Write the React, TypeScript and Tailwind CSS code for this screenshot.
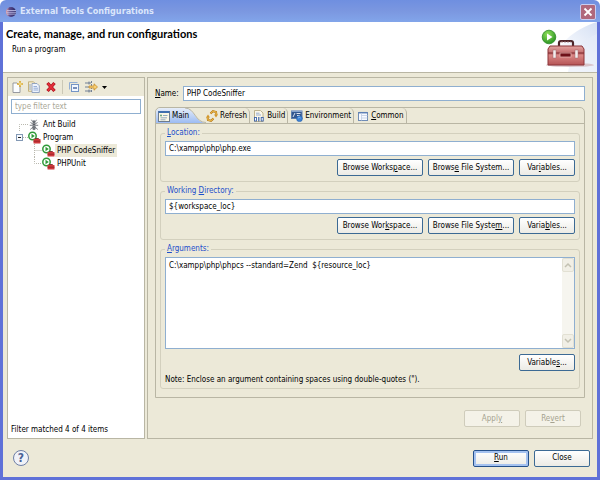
import type { ReactNode } from "react";

const argumentsText = "C:\\xampp\\php\\phpcs --standard=Zend  ${resource_loc}";

function EclipseIcon() {
  return (
    <svg width="12" height="12" viewBox="0 0 12 12" aria-hidden="true">
      <defs>
        <linearGradient id="eclipse" x1="0" x2="1">
          <stop offset="0" stopColor="#f0a9a4" />
          <stop offset="0.35" stopColor="#5c4b8c" />
          <stop offset="1" stopColor="#25255f" />
        </linearGradient>
      </defs>
      <circle cx="6" cy="6" r="5" fill="url(#eclipse)" />
      <path d="M2 4.5h9M1.5 6.3h9.5M2 8.1h8.6" stroke="#c8c8ee" strokeWidth="0.8" />
    </svg>
  );
}

function ToolboxArt() {
  return (
    <svg width="75" height="50" viewBox="0 0 75 50" aria-hidden="true">
      <defs>
        <linearGradient id="sky" x1="0" y1="1" x2="1" y2="0">
          <stop offset="0.3" stopColor="#ffffff" />
          <stop offset="1" stopColor="#d5e0f4" />
        </linearGradient>
        <linearGradient id="box" x1="0" y1="0" x2="0" y2="1">
          <stop offset="0" stopColor="#e3a5a1" />
          <stop offset="0.4" stopColor="#c0686a" />
          <stop offset="0.5" stopColor="#d98583" />
          <stop offset="1" stopColor="#b55456" />
        </linearGradient>
        <radialGradient id="run" cx="0.4" cy="0.3" r="0.8">
          <stop offset="0" stopColor="#8fe05a" />
          <stop offset="1" stopColor="#1f8a1c" />
        </radialGradient>
      </defs>
      <path d="M75 0v50H22C36 22 50 8 75 0Z" fill="url(#sky)" />
      <path d="M75 12C60 18 50 28 46 50h29Z" fill="#e6edf9" opacity="0.6" />
      <ellipse cx="48" cy="43" rx="24" ry="2" fill="#d9c5cb" />
      <path d="M37 24v-3q0-2 2-2h10q2 0 2 2v3" fill="none" stroke="#4d2529" strokeWidth="2.2" />
      <path d="M39 20h10" stroke="#a87a7c" strokeWidth="0.8" strokeDasharray="2 1" />
      <path d="M28 24h32l2 3v16H26V27Z" fill="url(#box)" stroke="#8c3538" strokeWidth="1" />
      <path d="M26 31h36" stroke="#7e2b2f" strokeWidth="1" />
      <rect x="38" y="31" width="11" height="4" fill="#6e1118" stroke="#e3b1ae" strokeWidth="0.8" />
      <rect x="31" y="28" width="3" height="8" fill="#f3eeee" stroke="#a06a6c" strokeWidth="0.5" />
      <rect x="53" y="28" width="3" height="8" fill="#f3eeee" stroke="#a06a6c" strokeWidth="0.5" />
      <circle cx="27" cy="15" r="6.8" fill="url(#run)" stroke="#2d8a26" strokeWidth="0.8" />
      <path d="M25 11.5v7l5.5-3.5Z" fill="#fff" />
    </svg>
  );
}

function NewIcon() {
  return (
    <svg width="12" height="12" viewBox="0 0 12 12" aria-hidden="true">
      <path d="M2 2h4l3 3v6.5H2Z" fill="#fbfdff" stroke="#8d9099" strokeWidth="0.9" />
      <path d="M9 0v6M6 3h6" stroke="#d9a62e" strokeWidth="1.6" />
      <path d="M9 1.5v3M7.5 3h3" stroke="#fff2a8" strokeWidth="0.8" />
    </svg>
  );
}

function DuplicateIcon() {
  return (
    <svg width="12" height="12" viewBox="0 0 12 12" aria-hidden="true">
      <path d="M.5.8h5l2 2v7.5h-7Z" fill="#f4ecd0" stroke="#b9a468" strokeWidth="0.8" />
      <path d="M4 2.5h5l2.3 2.3v6.7H4Z" fill="#eef4fd" stroke="#7e93b8" strokeWidth="0.8" />
      <path d="M5.5 5.5H9M5.5 7.2H10M5.5 9h4.5M2 3v6" stroke="#7f9ccd" strokeWidth="0.8" />
    </svg>
  );
}

function DeleteIcon() {
  return (
    <svg width="12" height="12" viewBox="0 0 12 12" aria-hidden="true">
      <path d="M2.5 2 9.5 10M9.5 2 2.5 10" stroke="#a90f19" strokeWidth="3.2" />
      <path d="M2.8 2.3 9.2 9.7M9.2 2.3 2.8 9.7" stroke="#e5303a" strokeWidth="1.8" />
    </svg>
  );
}

function CollapseIcon() {
  return (
    <svg width="12" height="12" viewBox="0 0 12 12" aria-hidden="true">
      <path d="M1.5 8.5v-7h8" fill="none" stroke="#93aed4" />
      <rect x="3.5" y="3.5" width="7" height="7" fill="#f3f8ff" stroke="#7495c6" />
      <path d="M5 7h4" stroke="#25498c" strokeWidth="1.2" />
    </svg>
  );
}

function FilterIcon() {
  return (
    <svg width="13" height="12" viewBox="0 0 13 12" aria-hidden="true">
      <path d="M0 2h6M0 6h5M0 10h6M4 .5v3M4 8.5v3" stroke="#65758f" strokeWidth="0.9" />
      <path d="M6.5 0v12" stroke="#65758f" strokeWidth="0.9" strokeDasharray="2 1" />
      <path d="M4 5h5V2.8L12.5 6 9 9.2V7H4Z" fill="#f7cf74" stroke="#c68d2c" strokeWidth="0.8" />
    </svg>
  );
}

function AntIcon() {
  return (
    <svg width="12" height="12" viewBox="0 0 12 12" aria-hidden="true">
      <path
        d="M4.5 2.5 3.5.8M7.5 2.5 8.5.8M5 5 2.5 3.5M7 5l2.5-1.5M5 6.3H1.8M7 6.3h3.2M5 8l-2.8 2.5M7 8l2.8 2.5"
        stroke="#5d6168"
        strokeWidth="0.8"
      />
      <circle cx="6" cy="2.8" r="1.6" fill="#6a6e75" />
      <circle cx="6" cy="5.5" r="1.3" fill="#5a5d64" />
      <ellipse cx="6" cy="8.8" rx="1.8" ry="2.4" fill="#73777d" />
    </svg>
  );
}

function ProgramIcon() {
  return (
    <svg width="13" height="13" viewBox="0 0 13 13" aria-hidden="true">
      <circle cx="4.5" cy="5" r="3.7" fill="#fff" stroke="#2f9a38" strokeWidth="1.5" />
      <path d="M3.5 2.8v4.4L6.8 5Z" fill="#2f9a38" />
      <path d="M7.5 8.5v-1h3v1" fill="none" stroke="#7c1f22" strokeWidth="0.9" />
      <rect x="5.5" y="8" width="7" height="4.5" rx="0.5" fill="#cf3a3e" />
      <path d="M5.5 10.2h7" stroke="#8e1c20" strokeWidth="0.7" />
    </svg>
  );
}

function MainIcon() {
  return (
    <svg width="12" height="12" viewBox="0 0 12 12" aria-hidden="true">
      <rect x="0.5" y="1.5" width="11" height="10" fill="#fbf8e4" stroke="#6c7b8f" />
      <path d="M.5 2h11" stroke="#3f6fae" strokeWidth="2" />
      <circle cx="3" cy="5.5" r="1" fill="#5f9e78" />
      <path d="M5 5.5h4.5M2.5 7.8H9M2.5 9.8h5" stroke="#7896b8" strokeWidth="0.8" />
    </svg>
  );
}

function RefreshIcon() {
  return (
    <svg width="12" height="12" viewBox="0 0 12 12" aria-hidden="true">
      <path d="M4.5 3.5 7 1.2l3 .8.5 3M7.5 8.5 5 10.8 2 10 1.5 7" fill="none" stroke="#b87916" strokeWidth="2" />
      <path d="M4.5 3.5 7 1.2l3 .8.5 3M7.5 8.5 5 10.8 2 10 1.5 7" fill="none" stroke="#f2c14f" strokeWidth="0.9" />
      <path d="M8 4.5h4L10 7.5ZM0 7.5h4L2 4.5Z" fill="#d2962a" />
    </svg>
  );
}

function BuildIcon() {
  return (
    <svg width="12" height="12" viewBox="0 0 12 12" aria-hidden="true">
      <path d="M1.5.5h6L10 3v8.5H1.5Z" fill="#fbf7ea" stroke="#b8ab85" strokeWidth="0.9" />
      <path d="M3 3.2h3.5M3 5h5" stroke="#8ca5cd" strokeWidth="0.9" />
      <rect x="1.5" y="7.5" width="2" height="3.5" fill="#fff" stroke="#3b62a8" strokeWidth="0.9" />
      <path d="M5.8 7v4.5" stroke="#3b62a8" strokeWidth="1.2" />
      <rect x="8.2" y="7.5" width="2" height="3.5" fill="#fff" stroke="#3b62a8" strokeWidth="0.9" />
    </svg>
  );
}

function EnvironmentIcon() {
  return (
    <svg width="12" height="12" viewBox="0 0 12 12" aria-hidden="true">
      <rect x="0.5" y="1" width="10.5" height="7.5" fill="#31568f" stroke="#5e7eae" />
      <path d="M.5 1.3H11" stroke="#8faad2" strokeWidth="1.2" />
      <path d="m2 7 2-4M5.5 3.5h4M6 5.5h3" stroke="#eef3fb" strokeWidth="0.9" />
      <circle cx="8.5" cy="8.7" r="2.9" fill="#3d82d6" stroke="#2860a8" strokeWidth="0.6" />
      <path d="M7 8q1.5-1 2.5 0" stroke="#8fc0ee" strokeWidth="0.9" fill="none" />
    </svg>
  );
}

function CommonIcon() {
  return (
    <svg width="12" height="12" viewBox="0 0 12 12" aria-hidden="true">
      <rect x="1.5" y="2.5" width="9" height="8" fill="#f7faff" stroke="#6f8cb6" />
      <path d="M1.5 2.7h9" stroke="#5d80b5" strokeWidth="1.5" />
      <path d="M4.5 3v7.5M4.5 5.5h6M4.5 8h6" stroke="#bfcde3" strokeWidth="0.8" />
    </svg>
  );
}

const toolbar = [
  { name: "New launch configuration", icon: <NewIcon /> },
  { name: "Duplicate", icon: <DuplicateIcon /> },
  { name: "Delete", icon: <DeleteIcon /> },
];

const tabs = [
  { id: "refresh", label: "Refresh", icon: <RefreshIcon /> },
  { id: "build", label: "Build", icon: <BuildIcon /> },
  { id: "environment", label: "Environment", icon: <EnvironmentIcon /> },
  {
    id: "common",
    label: (
      <span>
        <u>C</u>ommon
      </span>
    ),
    icon: <CommonIcon />,
  },
];

const programs = [
  { label: "PHP CodeSniffer", selected: true, line: "M6.5 0v13M6.5 6.5H14" },
  { label: "PHPUnit", selected: false, line: "M6.5 0v6.5H14" },
];

const fieldClass =
  "block h-[15px] w-full min-w-0 border border-[#8fafd0] bg-white px-[3px] text-[8px] leading-3 text-black outline-none";

function XpButton({
  children,
  variant = "normal",
  wide = false,
}: {
  children: ReactNode;
  variant?: "normal" | "default" | "disabled";
  wide?: boolean;
}) {
  const look = {
    normal: "border-[#3c6a94] bg-linear-to-b from-white to-[#ecebe5] text-black",
    default:
      "border-[#24508c] bg-linear-to-b from-white to-[#ecebe5] text-black inset-ring-2 inset-ring-[#a5c2f0]",
    disabled: "border-[#cfccbb] bg-[#f4f2e8] text-[#a5a28f]",
  }[variant];

  return (
    <button
      type="button"
      disabled={variant === "disabled"}
      className={`h-[17px] shrink-0 rounded-[2px] border text-center leading-3 whitespace-nowrap ${
        wide ? "w-[86px]" : "w-14"
      } ${look}`}
    >
      {children}
    </button>
  );
}

function Group({
  legend,
  children,
  grow = false,
}: {
  legend: ReactNode;
  children: ReactNode;
  grow?: boolean;
}) {
  return (
    <fieldset
      className={`min-w-0 rounded-[3px] border border-[#d3d0be] px-1 pt-0.5 ${
        grow ? "flex flex-1 flex-col pb-0.5" : "pb-[5px]"
      }`}
    >
      <legend className="px-0.5 leading-3 text-[#1c4fcb]">{legend}</legend>
      {children}
    </fieldset>
  );
}

function LaunchTree() {
  return (
    <ul className="flex-1 pt-1 pl-2 leading-[13px]">
      <li className="flex h-[13px] items-center">
        <svg width="12" height="13" aria-hidden="true">
          <path d="M3.5 13V6.5H12" fill="none" stroke="#b9b8ae" strokeDasharray="1 1" />
        </svg>
        <AntIcon />
        <span className="pl-[3px]">Ant Build</span>
      </li>
      <li>
        <div className="flex h-[13px] items-center">
          <button type="button" aria-label="Collapse Program" className="h-[13px] w-3">
            <svg width="12" height="13" aria-hidden="true">
              <path d="M7 6.5h5" stroke="#b9b8ae" strokeDasharray="1 1" />
              <rect x="0.5" y="3.5" width="6" height="6" fill="#f6f9fd" stroke="#8399b5" />
              <path d="M2 6.5h3" stroke="#222" />
            </svg>
          </button>
          <ProgramIcon />
          <span className="pl-0.5">Program</span>
        </div>
        <ul className="pl-3">
          {programs.map((item) => (
            <li key={item.label} className="flex h-[13px] items-center">
              <svg width="14" height="13" aria-hidden="true">
                <path d={item.line} fill="none" stroke="#b9b8ae" strokeDasharray="1 1" />
              </svg>
              <ProgramIcon />
              <span className={`px-0.5 ${item.selected ? "bg-[#ece9d8]" : ""}`}>{item.label}</span>
            </li>
          ))}
        </ul>
      </li>
    </ul>
  );
}

function LaunchList() {
  return (
    <section className="flex w-[138px] shrink-0 flex-col border border-[#b9b6a4] bg-white">
      <div className="flex h-[18px] items-center gap-[5px] bg-[#ece9d8] pl-[3px]">
        {toolbar.map((tool) => (
          <button key={tool.name} type="button" aria-label={tool.name}>
            {tool.icon}
          </button>
        ))}
        <span className="h-3.5 w-px bg-[#cbc8b6]" />
        <button type="button" aria-label="Collapse all">
          <CollapseIcon />
        </button>
        <button type="button" aria-label="Filter" className="flex items-center gap-1">
          <FilterIcon />
          <svg width="5" height="3" aria-hidden="true">
            <path d="M0 0h5L2.5 3Z" fill="#000" />
          </svg>
        </button>
      </div>
      <div className="px-[3px] pt-[3px]">
        <input
          type="text"
          aria-label="Filter"
          placeholder="type filter text"
          className={`${fieldClass} placeholder:text-[#a9a797]`}
        />
      </div>
      <LaunchTree />
      <p className="px-[3px] pb-0.5 leading-3">Filter matched 4 of 4 items</p>
    </section>
  );
}

function TabBar() {
  return (
    <div role="tablist" className="flex h-4 border-b border-[#b9b6a4]">
      <button
        type="button"
        role="tab"
        aria-selected="true"
        className="relative flex w-[47px] shrink-0 items-center gap-0.5 pl-0.5"
      >
        <svg width="50" height="15" viewBox="0 0 50 15" className="absolute top-0 left-0" aria-hidden="true">
          <defs>
            <linearGradient id="tab" x1="0" y1="0" x2="0" y2="1">
              <stop offset="0" stopColor="#e6edf9" />
              <stop offset="1" stopColor="#9dbcf3" />
            </linearGradient>
          </defs>
          <path d="M0 15V5Q0 0 5 0H29C39 0 39 15 50 15Z" fill="url(#tab)" />
          <path d="M29 0C39 0 39 14.5 50 14.5" fill="none" stroke="#b9b6a4" />
        </svg>
        <span className="relative">
          <MainIcon />
        </span>
        <span className="relative">Main</span>
      </button>
      {tabs.map((tab) => (
        <button
          key={tab.id}
          type="button"
          role="tab"
          aria-selected="false"
          className="flex shrink-0 items-center gap-0.5 rounded-tr-[5px] border-r border-[#b9b6a4] pr-0.5 pl-[3px]"
        >
          {tab.icon}
          {tab.label}
        </button>
      ))}
    </div>
  );
}

function MainTab() {
  return (
    <div role="tabpanel" className="flex flex-1 flex-col gap-[3px] px-1 pt-[3px] pb-2">
      <Group
        legend={
          <label htmlFor="location">
            <u>L</u>ocation:
          </label>
        }
      >
        <input id="location" type="text" defaultValue="C:\xampp\php\php.exe" className={fieldClass} />
        <div className="mt-[3px] flex justify-end gap-[5px]">
          <XpButton wide>
            Browse Works<u>p</u>ace...
          </XpButton>
          <XpButton wide>
            Brows<u>e</u> File System...
          </XpButton>
          <XpButton>
            Var<u>i</u>ables...
          </XpButton>
        </div>
      </Group>

      <Group
        legend={
          <label htmlFor="directory">
            Working <u>D</u>irectory:
          </label>
        }
      >
        <input id="directory" type="text" defaultValue="${workspace_loc}" className={fieldClass} />
        <div className="mt-[3px] flex justify-end gap-[5px]">
          <XpButton wide>
            Browse Wor<u>k</u>space...
          </XpButton>
          <XpButton wide>
            Browse File Syste<u>m</u>...
          </XpButton>
          <XpButton>
            Varia<u>b</u>les...
          </XpButton>
        </div>
      </Group>

      <Group
        grow
        legend={
          <label htmlFor="arguments">
            <u>A</u>rguments:
          </label>
        }
      >
        <div className="flex flex-1 border border-[#8fafd0] bg-white">
          <textarea
            id="arguments"
            defaultValue={argumentsText}
            className="min-w-0 flex-1 resize-none px-[3px] pt-0.5 leading-3 outline-none"
          />
          <div className="flex w-3 flex-col justify-between bg-[#f6f5ef]">
            <button
              type="button"
              aria-label="Scroll up"
              className="flex h-3.5 items-center justify-center rounded-[2px] border border-[#e2e0d3] bg-[#f1efe6]"
            >
              <svg width="8" height="6" aria-hidden="true">
                <path d="m1 5 3-3 3 3" fill="none" stroke="#c3c1b2" strokeWidth="1.5" />
              </svg>
            </button>
            <button
              type="button"
              aria-label="Scroll down"
              className="flex h-3.5 items-center justify-center rounded-[2px] border border-[#e2e0d3] bg-[#f1efe6]"
            >
              <svg width="8" height="6" aria-hidden="true">
                <path d="m1 1 3 3 3-3" fill="none" stroke="#c3c1b2" strokeWidth="1.5" />
              </svg>
            </button>
          </div>
        </div>
        <div className="mt-[5px] flex justify-end">
          <XpButton>
            Variable<u>s</u>...
          </XpButton>
        </div>
        <p className="mt-[3px] leading-3">
          Note: Enclose an argument containing spaces using double-quotes (").
        </p>
      </Group>
    </div>
  );
}

export default function App() {
  return (
    <main className="flex h-screen flex-col bg-white font-['DejaVu_Sans_Condensed','DejaVu_Sans',sans-serif] text-[8px] text-black">
      <header className="flex h-[22px] shrink-0 items-center gap-[3px] rounded-t-md bg-linear-to-b from-[#6f8fe0] via-[#7b97e0] to-[#82a5ea] pt-0.5 pr-1 pl-[5px]">
        <EclipseIcon />
        <h1 className="flex-1 text-[9px] font-bold text-[#dbe6fb]">External Tools Configurations</h1>
        <button
          type="button"
          aria-label="Close window"
          className="flex h-4 w-4 items-center justify-center rounded-[2px] border border-[#c9cdf0] bg-[#b0687c]"
        >
          <svg width="10" height="10" aria-hidden="true">
            <path d="m1.5 1.5 7 7M8.5 1.5l-7 7" stroke="#fff" strokeWidth="1.8" />
          </svg>
        </button>
      </header>

      <div className="flex flex-1 flex-col border-x-[3px] border-b-[3px] border-[#5f71d8] bg-[#ece9d8]">
        <div className="flex h-[51px] shrink-0 justify-between border-b border-[#b9b6a4] bg-white">
          <div className="pt-1 pl-[3px]">
            <h2 className="font-['Lato','DejaVu_Sans',sans-serif] text-[11px] leading-4 font-bold">
              Create, manage, and run configurations
            </h2>
            <p className="pt-0.5 pl-1.5 leading-3">Run a program</p>
          </div>
          <ToolboxArt />
        </div>

        <div className="flex flex-1 gap-0.5 px-1 pt-1">
          <LaunchList />
          <section className="flex min-w-0 flex-1 flex-col border border-[#b9b6a4] px-[7px] pt-2 pb-[11px]">
            <div className="flex items-center gap-1">
              <label htmlFor="name" className="shrink-0">
                <u>N</u>ame:
              </label>
              <input id="name" type="text" defaultValue="PHP CodeSniffer" className={fieldClass} />
            </div>
            <div className="mt-1.5 flex flex-1 flex-col rounded-t-[5px] border border-[#b9b6a4]">
              <TabBar />
              <MainTab />
            </div>
            <div className="mt-3 flex justify-end gap-[5px] pr-1">
              <XpButton variant="disabled">
                Appl<u>y</u>
              </XpButton>
              <XpButton variant="disabled">
                Re<u>v</u>ert
              </XpButton>
            </div>
          </section>
        </div>

        <footer className="flex h-[38px] shrink-0 items-center gap-[5px] pr-[7px] pl-2.5">
          <button
            type="button"
            aria-label="Help"
            className="mr-auto flex h-4 w-4 items-center justify-center rounded-full border border-[#6e7fa6] bg-[#f0f2f8] text-[12px] leading-3 font-bold text-[#4a6295]"
          >
            ?
          </button>
          <XpButton variant="default">
            <u>R</u>un
          </XpButton>
          <XpButton>Close</XpButton>
        </footer>
      </div>
    </main>
  );
}
